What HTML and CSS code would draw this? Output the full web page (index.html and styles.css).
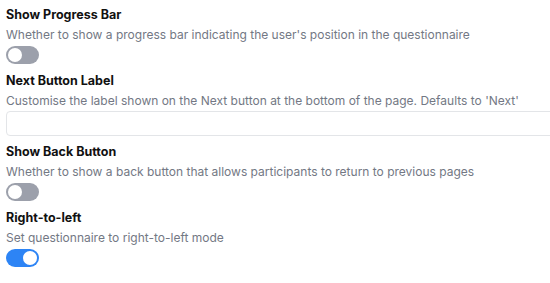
FILE: index.html
```html
<!DOCTYPE html>
<html lang="en">
<head>
    <meta charset="UTF-8">
    <meta name="viewport" content="width=device-width, initial-scale=1.0">
    <title>Questionnaire Settings</title>
    <link rel="stylesheet" href="styles.css">
</head>
<body>
    <div class="settings">
        <div class="field">
            <div class="field-title">Show Progress Bar</div>
            <div class="field-desc">Whether to show a progress bar indicating the user's position in the questionnaire</div>
            <label class="toggle">
                <input type="checkbox">
                <span class="slider"></span>
            </label>
        </div>

        <div class="field field-input">
            <div class="field-title">Next Button Label</div>
            <div class="field-desc">Customise the label shown on the Next button at the bottom of the page. Defaults to 'Next'</div>
            <input type="text" class="text-input">
        </div>

        <div class="field">
            <div class="field-title">Show Back Button</div>
            <div class="field-desc">Whether to show a back button that allows participants to return to previous pages</div>
            <label class="toggle">
                <input type="checkbox">
                <span class="slider"></span>
            </label>
        </div>

        <div class="field">
            <div class="field-title">Right-to-left</div>
            <div class="field-desc">Set questionnaire to right-to-left mode</div>
            <label class="toggle">
                <input type="checkbox" checked>
                <span class="slider"></span>
            </label>
        </div>
    </div>
</body>
</html>
```

FILE: styles.css
```css
body {
    margin: 0;
    font-family: Inter, "Noto Sans", sans-serif;
    background: white;
    color: #111;
}
.settings {
    padding: 5px 0 0 6px;
}
.field {
    margin-bottom: 7px;
}
.field-input {
    margin-bottom: 6px;
}
.field-title {
    font-size: 12.5px;
    font-weight: bold;
    line-height: 20px;
}
.field-desc {
    font-size: 12px;
    line-height: 19px;
    color: #737884;
    white-space: nowrap;
}
.toggle {
    position: relative;
    display: block;
    width: 33px;
    height: 18px;
    margin-top: 2px;
}
.toggle input {
    display: none;
}
.slider {
    position: absolute;
    inset: 0;
    background: #9ca0ab;
    border-radius: 9px;
}
.slider::before {
    content: "";
    position: absolute;
    left: 2px;
    top: 2px;
    width: 14px;
    height: 14px;
    border-radius: 50%;
    background: white;
}
.toggle input:checked + .slider {
    background: #2d84f5;
}
.toggle input:checked + .slider::before {
    left: 17px;
}
.text-input {
    display: block;
    box-sizing: border-box;
    width: 560px;
    height: 25px;
    margin-top: 1px;
    border: 1px solid #e3e5e8;
    border-radius: 4px;
}
```
